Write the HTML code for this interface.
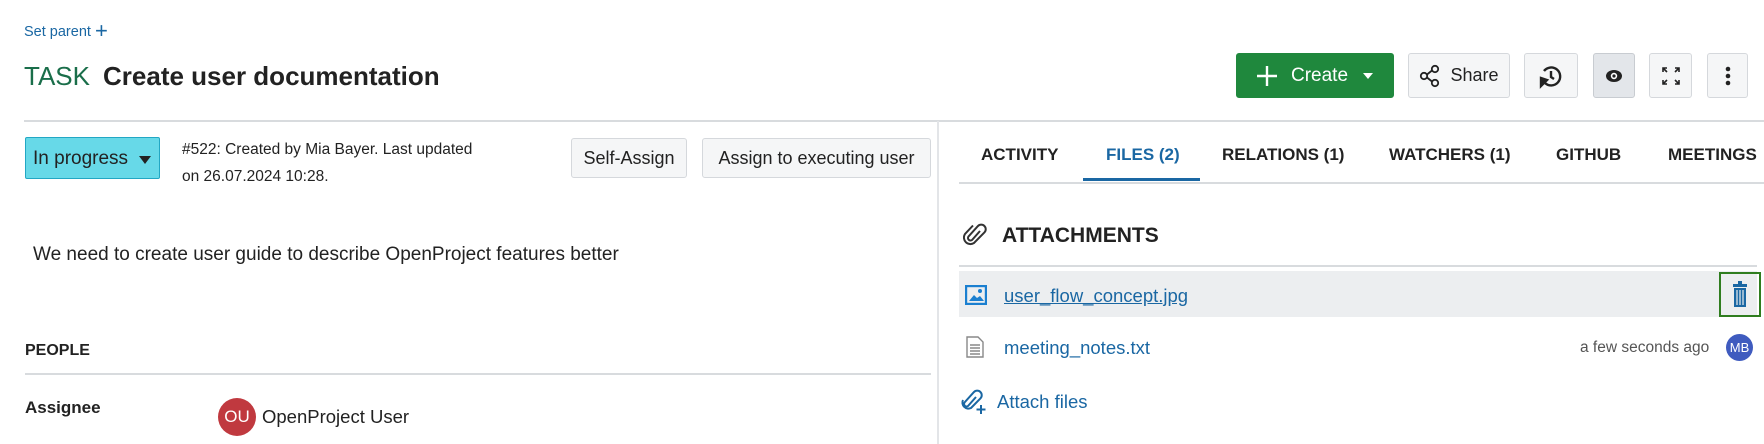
<!DOCTYPE html>
<html><head><meta charset="utf-8"><style>
*{box-sizing:border-box;margin:0;padding:0}
body{width:1764px;height:444px;overflow:hidden;background:#fff;font-family:"Liberation Sans",sans-serif;color:#222;position:relative}
.a{position:absolute;white-space:nowrap}
.btn{position:absolute;border:1px solid #d5d8dc;background:#f5f6f7;border-radius:3px;display:flex;align-items:center;justify-content:center;font-size:18px;color:#222}
.tab{position:absolute;top:145px;font-size:17px;font-weight:bold;color:#222}
.blue{color:#1a67a3}
</style></head><body>
<div class="a blue" style="left:24px;top:16px;font-size:14.5px">Set parent <span style="font-size:22px;position:relative;top:2px">+</span></div>
<div class="a" style="left:24px;top:61px;font-size:26px;color:#1a6e4a">TASK</div>
<div class="a" style="left:103px;top:61px;font-size:26px;font-weight:bold;color:#222">Create user documentation</div>

<div class="btn" style="left:1236px;top:53px;width:158px;height:45px;background:#1f883d;border-color:#1f883d;color:#fff;justify-content:flex-start;padding-left:18px">
<svg width="24" height="24" viewBox="0 0 24 24"><path d="M12 2v20M2 12h20" stroke="#fff" stroke-width="2.4"/></svg>
<span style="margin-left:12px;font-size:19px">Create</span>
<svg style="margin-left:14px" width="12" height="8" viewBox="0 0 12 8"><path d="M1 1h10L6 7z" fill="#fff"/></svg></div>
<div class="btn" style="left:1408px;top:53px;width:102px;height:45px">
<svg width="22" height="24" viewBox="0 0 22 24" fill="none" stroke="#222" stroke-width="1.8"><circle cx="16" cy="5" r="3.2"/><circle cx="5" cy="12" r="3.2"/><circle cx="16" cy="19" r="3.2"/><path d="M8 10.5l5-4M8 13.5l5 4"/></svg>
<span style="margin-left:9px">Share</span></div>
<div class="btn" style="left:1524px;top:53px;width:54px;height:45px">
<svg width="26" height="26" viewBox="0 0 26 26" fill="none" stroke="#222" stroke-width="2.4"><path d="M7 20A9 9 0 1 0 6 8"/><path d="M13 8v6l3 2"/><path d="M3 15l6 2-6 6z" fill="#222"/></svg></div>
<div class="btn" style="left:1593px;top:53px;width:42px;height:45px;background:#e3e6ea;border-color:#c8ccd1">
<svg width="18" height="14" viewBox="0 0 18 14"><ellipse cx="9" cy="7" rx="8" ry="6" fill="#222"/><circle cx="9" cy="7" r="3.2" fill="#fff"/><circle cx="9" cy="7" r="1.6" fill="#222"/></svg></div>
<div class="btn" style="left:1649px;top:53px;width:43px;height:45px">
<svg width="20" height="20" viewBox="0 0 20 20" fill="none" stroke="#222" stroke-width="1.6"><path d="M2 6V2h4M2 2l4 4M18 6V2h-4M18 2l-4 4M2 14v4h4M2 18l4-4M18 14v4h-4M18 18l-4-4"/></svg></div>
<div class="btn" style="left:1707px;top:53px;width:41px;height:45px">
<svg width="6" height="20" viewBox="0 0 6 20" fill="#222"><circle cx="3" cy="3" r="2.3"/><circle cx="3" cy="10" r="2.3"/><circle cx="3" cy="17" r="2.3"/></svg></div>

<div class="a" style="left:24px;top:120px;width:1740px;height:2px;background:#d8dbde"></div>
<div class="a" style="left:937px;top:121px;width:2px;height:323px;background:#e3e5e8"></div>

<div class="a" style="left:25px;top:137px;width:135px;height:42px;background:#67d9e8;border:1px solid #22a7c4;border-radius:2px;font-size:19px;padding:10px 0 0 7px">In progress <svg style="margin-left:6px" width="12" height="8" viewBox="0 0 12 8"><path d="M0 0h12L6 8z" fill="#222"/></svg></div>
<div class="a" style="left:182px;top:136px;font-size:15.5px;line-height:27px">#522: Created by Mia Bayer. Last updated<br>on 26.07.2024 10:28.</div>
<div class="btn" style="left:571px;top:138px;width:116px;height:40px">Self-Assign</div>
<div class="btn" style="left:702px;top:138px;width:229px;height:40px">Assign to executing user</div>
<div class="a" style="left:33px;top:244px;font-size:19px">We need to create user guide to describe OpenProject features better</div>
<div class="a" style="left:25px;top:342px;font-size:16px;font-weight:bold">PEOPLE</div>
<div class="a" style="left:25px;top:373px;width:906px;height:2px;background:#d8dbde"></div>
<div class="a" style="left:25px;top:398px;font-size:17px;font-weight:bold">Assignee</div>
<div class="a" style="left:218px;top:398px;width:38px;height:38px;border-radius:50%;background:#c0393f;color:#fff;font-size:17px;text-align:center;line-height:38px">OU</div>
<div class="a" style="left:262px;top:406px;font-size:18.5px">OpenProject User</div>

<div class="tab" style="left:981px">ACTIVITY</div>
<div class="tab blue" style="left:1106px">FILES (2)</div>
<div class="tab" style="left:1222px">RELATIONS (1)</div>
<div class="tab" style="left:1389px">WATCHERS (1)</div>
<div class="tab" style="left:1556px">GITHUB</div>
<div class="tab" style="left:1668px">MEETINGS</div>
<div class="a" style="left:959px;top:182px;width:805px;height:2px;background:#d8dbde"></div>
<div class="a" style="left:1083px;top:178px;width:117px;height:3px;background:#1a67a3"></div>

<svg class="a" style="left:963px;top:222px" width="24" height="26" viewBox="0 0 24 26" fill="none" stroke="#333" stroke-width="2"><path d="M17 9l-8 9a2.5 2.5 0 0 1-3.5-3.5L15 4a4.5 4.5 0 0 1 6.4 6.4L11 21a6.5 6.5 0 0 1-9-9l8-8.5"/></svg>
<div class="a" style="left:1002px;top:224px;font-size:21px;font-weight:bold">ATTACHMENTS</div>
<div class="a" style="left:959px;top:265px;width:798px;height:2px;background:#d8dbde"></div>
<div class="a" style="left:959px;top:271px;width:798px;height:46px;background:#eceef0"></div>
<svg class="a" style="left:965px;top:285px" width="22" height="20" viewBox="0 0 22 20"><rect x="1" y="1" width="20" height="18" fill="none" stroke="#1a7fd0" stroke-width="2.4"/><path d="M4 16l5-6 3 3 3-2 4 5z" fill="#1a7fd0"/><circle cx="15" cy="6" r="2" fill="#1a7fd0"/></svg>
<div class="a blue" style="left:1004px;top:285px;font-size:18.5px;text-decoration:underline">user_flow_concept.jpg</div>
<div class="a" style="left:1719px;top:272px;width:42px;height:45px;border:2px solid #2f7d1f"></div>
<svg class="a" style="left:1732px;top:280px" width="16" height="28" viewBox="0 0 16 28" fill="#1a67a3"><rect x="6" y="1" width="4" height="3"/><rect x="1" y="4" width="14" height="3"/><path d="M2 8h12v19H2z"/><path d="M5 10v15M8 10v15M11 10v15" stroke="#eceef0" stroke-width="1.2"/></svg>
<svg class="a" style="left:966px;top:336px" width="18" height="22" viewBox="0 0 18 22" fill="none" stroke="#888" stroke-width="1.4"><path d="M1 1h11l5 5v15H1z"/><path d="M4 9h10M4 12h10M4 15h10M4 18h10"/></svg>
<div class="a blue" style="left:1004px;top:337px;font-size:18.5px">meeting_notes.txt</div>
<div class="a" style="left:1580px;top:339px;font-size:15.5px;color:#555">a few seconds ago</div>
<div class="a" style="left:1726px;top:334px;width:27px;height:27px;border-radius:50%;background:#3f5bbf;color:#fff;font-size:13px;text-align:center;line-height:27px">MB</div>
<svg class="a" style="left:961px;top:389px" width="26" height="26" viewBox="0 0 26 26" fill="none" stroke="#1a67a3" stroke-width="2"><path d="M15 8l-8 9a2.5 2.5 0 0 1-3.5-3.5L13 3a4.5 4.5 0 0 1 6.4 6.4L10 19a6 6 0 0 1-8-8"/><path d="M20 16v9M15.5 20.5h9"/></svg>
<div class="a blue" style="left:997px;top:391px;font-size:18.5px">Attach files</div>
</body></html>
